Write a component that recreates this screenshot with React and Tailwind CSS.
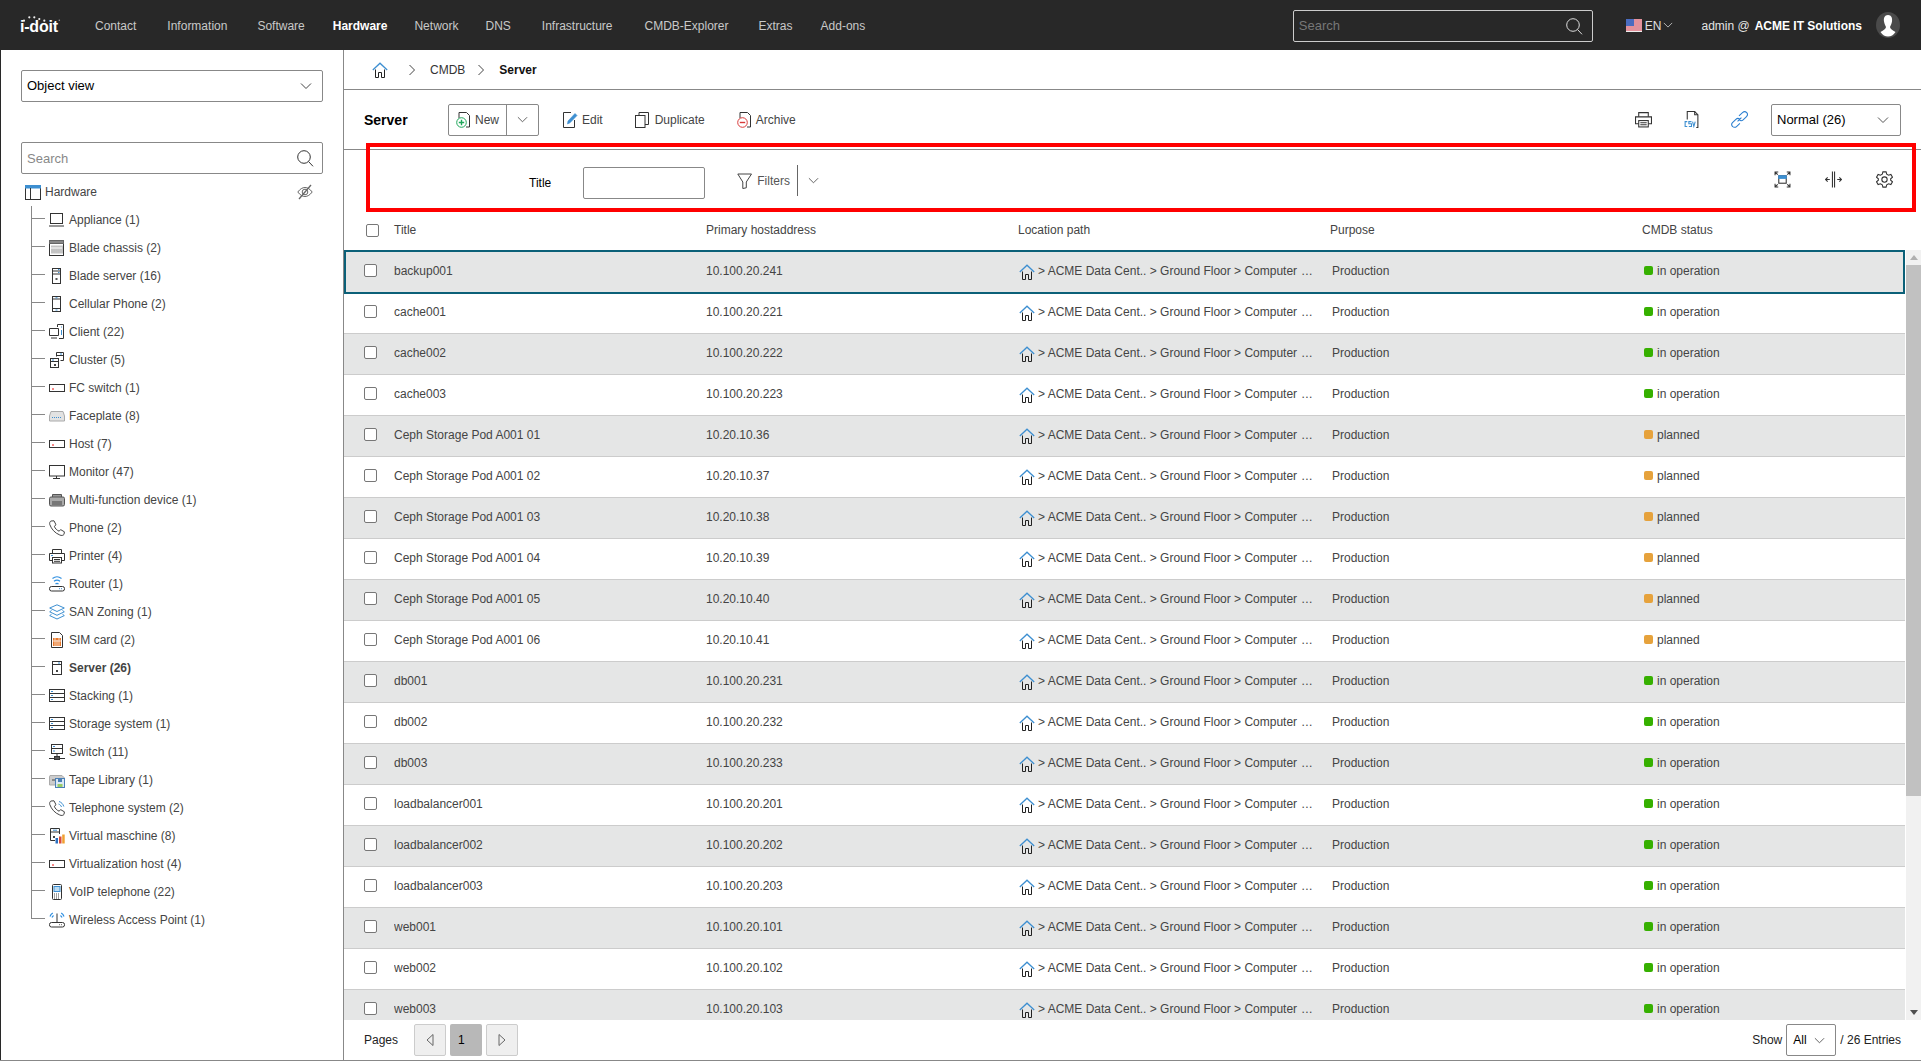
import React from "react";

const D = "#333";
const B = "#3d8fd1";
const Svg = ({ children, s = 16, c = "" }) => (
  <svg width={s} height={s} viewBox="0 0 16 16" fill="none" stroke={D} strokeWidth="1" className={"shrink-0 " + c}>{children}</svg>
);
const Chev = ({ c = "#444", w = 12 }) => (
  <svg width={w} height={w} viewBox="0 0 12 12" fill="none" stroke={c} strokeWidth="1" className="shrink-0"><path d="M1 3.5 L6 8.5 L11 3.5" /></svg>
);
const SearchI = ({ c = "#333" }) => (
  <svg width="17" height="17" viewBox="0 0 17 17" fill="none" stroke={c} strokeWidth="1" className="shrink-0"><circle cx="7" cy="7" r="6.3" /><path d="M11.6 11.6 L16 16.3" /></svg>
);
const Home = () => (
  <Svg>
    <path d="M3.5 7.5 V15.5 H6.5 V10.5 H9.5 V15.5 H12.5 V7.5" stroke="#222" />
    <path d="M0.8 8 L8 1.2 L15.2 8" stroke={B} strokeWidth="1.3" />
  </Svg>
);
const Switchy = () => (<Svg><rect x="0.5" y="4.5" width="15" height="7" /><path d="M3 9 H5" stroke="#e11" /></Svg>);
const Rack = () => (
  <Svg>
    <rect x="0.5" y="1.5" width="15" height="12" />
    <path d="M0.5 5.5 H15.5 M0.5 9.5 H15.5" />
    <path d="M2 3.5 H4 M2 7.5 H4 M2 11.5 H4" stroke={B} />
  </Svg>
);
const Srv = () => (
  <Svg>
    <rect x="3.5" y="1.5" width="9" height="13" />
    <path d="M3.5 4.5 H12.5" />
    <path d="M9 3 H11" stroke={B} />
    <rect x="7" y="10" width="2" height="2" fill="#444" stroke="none" />
  </Svg>
);
const icons = {
  laptop: () => (<Svg><rect x="1.5" y="1.5" width="12" height="10" /><path d="M0 14 H15" /></Svg>),
  chassis: () => (
    <Svg>
      <rect x="0.5" y="0.5" width="14" height="15" />
      <rect x="0.5" y="0.5" width="14" height="3" fill="#888" stroke="#666" />
      <path d="M3 5.5 V13.5 M5 5.5 V13.5 M7 5.5 V13.5 M9 5.5 V13.5 M11 5.5 V13.5 M13 5.5 V13.5" stroke="#888" />
      <path d="M2 8 H13" stroke="#fff" />
    </Svg>
  ),
  blade: () => (
    <Svg>
      <rect x="3.5" y="0.5" width="8" height="15" />
      <path d="M3.5 3 H11.5 M3.5 6 H11.5" />
      <path d="M9 1.5 H10.5 M9 4.5 H10.5" stroke={B} />
      <rect x="6.5" y="10" width="2" height="2" fill="#555" stroke="none" />
    </Svg>
  ),
  cell: () => (
    <Svg>
      <rect x="3.5" y="0.5" width="8" height="15" />
      <path d="M3.5 3 H11.5 M3.5 12.5 H11.5" />
      <path d="M6.5 1.8 H8.5 M6.5 14 H8.5" stroke={B} />
    </Svg>
  ),
  client: () => (
    <Svg>
      <path d="M9.5 4.5 H0.5 V11.5 H9.5 Z M2 14 H8" />
      <path d="M8.5 3 V0.5 H14.5 V14.5 H10" />
      <path d="M12 3 H13 M12.5 6 V11" stroke={B} />
    </Svg>
  ),
  cluster: () => (
    <Svg>
      <rect x="1.5" y="6.5" width="8" height="9" />
      <path d="M1.5 9.5 H9.5" />
      <path d="M3 8 H5" stroke={B} />
      <rect x="5" y="12" width="2" height="2" fill="#444" stroke="none" />
      <path d="M7.5 4.5 V0.5 H14.5 V8.5 H11.5" />
      <path d="M7.5 3.5 H14.5" />
      <path d="M11 2 H13" stroke={B} />
    </Svg>
  ),
  fc: Switchy,
  face: () => (
    <Svg>
      <path d="M2 3.5 H14 L15.5 8 V13 H0.5 V8 Z" fill="#e2e2e2" stroke="#aaa" />
      <path d="M3 9.5 H13" stroke={B} strokeDasharray="1 1" />
    </Svg>
  ),
  monitor: () => (<Svg><rect x="0.5" y="1.5" width="15" height="10.5" /><path d="M7.5 12 V14 M4 14.5 H11" /></Svg>),
  mfd: () => (
    <Svg>
      <path d="M3.5 5 V2.5 H12.5 V5" fill="#999" stroke="#555" />
      <rect x="0.5" y="5" width="15" height="9" rx="1.5" fill="#aaa" stroke="#555" />
      <rect x="3" y="9" width="10" height="4" fill="#777" stroke="none" />
    </Svg>
  ),
  phone: () => (
    <Svg><path d="M2 1 L5 0.8 L7 4.8 L5.3 6.3 C6.2 8.6 8 10.4 10.2 11.2 L11.6 9.6 L15.4 11.8 L15 14.4 C14.2 15.5 12.5 15.8 10.8 15 C5.8 13 2.5 9.2 0.8 4.6 C0.4 3 0.8 1.6 2 1 Z" stroke="#444" /></Svg>
  ),
  printer: () => (
    <Svg>
      <path d="M3.5 5.5 V1.5 H12.5 V5.5" />
      <path d="M3.5 12.5 H0.5 V5.5 H15.5 V12.5 H12.5" />
      <rect x="3.5" y="9.5" width="9" height="5.5" />
      <path d="M5 11.5 H11 M5 13.3 H11" />
      <path d="M2 7.5 H4" stroke={B} />
    </Svg>
  ),
  router: () => (
    <Svg>
      <rect x="0.5" y="10.5" width="15" height="4.5" rx="2" />
      <path d="M10 12.7 H13" stroke={B} strokeDasharray="1 1" />
      <path d="M3.5 2.5 C6.2 0.4 9.8 0.4 12.5 2.5 M5 5.2 C6.8 3.8 9.2 3.8 11 5.2 M6.5 8 C7.4 7.2 8.6 7.2 9.5 8" stroke="#2f8fe0" strokeWidth="1.2" />
    </Svg>
  ),
  san: () => (
    <Svg>
      <path d="M8 0.8 L15.3 4 L8 7.5 L0.7 4 Z" stroke={B} />
      <path d="M2.5 6.5 L0.7 7.8 L8 11.3 L15.3 7.8 L13.5 6.5 M2.5 10.3 L0.7 11.6 L8 15 L15.3 11.6 L13.5 10.3" stroke={B} />
    </Svg>
  ),
  sim: () => (
    <Svg>
      <path d="M2.5 0.5 H10.5 L13.5 3.5 V15.5 H2.5 Z" />
      <rect x="4" y="6" width="8" height="8" fill="#e8782a" stroke="none" />
      <path d="M6 6 V14 M8 8 V14 M10 6 V14 M4 9 H12" stroke="#fff" strokeWidth="0.7" />
    </Svg>
  ),
  server: Srv,
  stack: Rack,
  swi: () => (
    <Svg>
      <rect x="2.5" y="0.5" width="11" height="9" />
      <path d="M2.5 4.5 H13.5" />
      <path d="M4 2.5 H6 M4 7 H6" stroke={B} />
      <path d="M8 9.5 V12.5 M0 14.5 H5.5 M10.5 14.5 H16" />
      <rect x="5.5" y="12.5" width="5" height="3" fill="#555" />
    </Svg>
  ),
  tape: () => (
    <Svg>
      <path d="M1 3.5 H13 L15.5 6 V8 H7 V13 H0.5 V5 Z" fill="#ccc" stroke="#aaa" />
      <rect x="3" y="7" width="3" height="2" fill="#888" stroke="none" />
      <rect x="6.5" y="6.5" width="9" height="9" fill="#dbe9f6" stroke="#4a7fb5" />
      <rect x="9" y="7" width="4" height="3" fill="#4a7fb5" stroke="none" />
      <rect x="8.5" y="12" width="5" height="3" fill="#9c6" stroke="none" />
    </Svg>
  ),
  tel: () => (
    <Svg>
      <path d="M2 1 L5 0.8 L7 4.8 L5.3 6.3 C6.2 8.6 8 10.4 10.2 11.2 L11.6 9.6 L15.4 11.8 L15 14.4 C14.2 15.5 12.5 15.8 10.8 15 C5.8 13 2.5 9.2 0.8 4.6 C0.4 3 0.8 1.6 2 1 Z" stroke="#444" />
      <path d="M10 1.5 C12.5 2.3 14 4 14.8 6.5 M9.5 4 C11 4.5 12 5.5 12.5 7" stroke={B} />
    </Svg>
  ),
  vm: () => (
    <Svg>
      <path d="M6 12.5 H1.5 V0.5 H10.5 V6" />
      <path d="M1.5 4 H10.5" />
      <path d="M4 2.2 H8" stroke={B} />
      <rect x="4" y="8" width="2" height="2" fill="#444" stroke="none" />
      <rect x="6.5" y="10" width="2.5" height="5.5" fill="#2a6fc0" stroke="none" />
      <rect x="10" y="8.5" width="2.5" height="7" fill="#d94a3a" stroke="none" />
      <rect x="13.2" y="6.5" width="2.5" height="9" fill="#f0a030" stroke="none" />
    </Svg>
  ),
  voip: () => (
    <Svg>
      <rect x="3.5" y="0.5" width="9" height="15" rx="1" />
      <rect x="5" y="2.5" width="6" height="5" fill="#bcdcf3" stroke={B} />
      <path d="M5 10 H11 M5 12 H11 M5 14 H11" stroke="#444" strokeDasharray="1 1" />
    </Svg>
  ),
  wap: () => (
    <Svg>
      <rect x="0.5" y="10.5" width="15" height="4.5" rx="2" />
      <path d="M10 12.7 H13" stroke="#666" strokeDasharray="1 1" />
      <path d="M8 1.5 V10" />
      <path d="M1 4.5 C1.5 3 2.3 1.8 3.8 1 M3 5.5 C3.3 4.7 3.8 4 4.6 3.6 M15 4.5 C14.5 3 13.7 1.8 12.2 1 M13 5.5 C12.7 4.7 12.2 4 11.4 3.6" stroke="#2f8fe0" strokeWidth="1.2" />
    </Svg>
  ),
};

const tree = [
  ["Appliance (1)", "laptop"], ["Blade chassis (2)", "chassis"], ["Blade server (16)", "blade"], ["Cellular Phone (2)", "cell"],
  ["Client (22)", "client"], ["Cluster (5)", "cluster"], ["FC switch (1)", "fc"], ["Faceplate (8)", "face"],
  ["Host (7)", "fc"], ["Monitor (47)", "monitor"], ["Multi-function device (1)", "mfd"], ["Phone (2)", "phone"],
  ["Printer (4)", "printer"], ["Router (1)", "router"], ["SAN Zoning (1)", "san"], ["SIM card (2)", "sim"],
  ["Server (26)", "server"], ["Stacking (1)", "stack"], ["Storage system (1)", "stack"], ["Switch (11)", "swi"],
  ["Tape Library (1)", "tape"], ["Telephone system (2)", "tel"], ["Virtual maschine (8)", "vm"],
  ["Virtualization host (4)", "fc"], ["VoIP telephone (22)", "voip"], ["Wireless Access Point (1)", "wap"],
];

const rows = [
  ["backup001", "10.100.20.241", "o"], ["cache001", "10.100.20.221", "o"], ["cache002", "10.100.20.222", "o"], ["cache003", "10.100.20.223", "o"],
  ["Ceph Storage Pod A001 01", "10.20.10.36", "p"], ["Ceph Storage Pod A001 02", "10.20.10.37", "p"], ["Ceph Storage Pod A001 03", "10.20.10.38", "p"],
  ["Ceph Storage Pod A001 04", "10.20.10.39", "p"], ["Ceph Storage Pod A001 05", "10.20.10.40", "p"], ["Ceph Storage Pod A001 06", "10.20.10.41", "p"],
  ["db001", "10.100.20.231", "o"], ["db002", "10.100.20.232", "o"], ["db003", "10.100.20.233", "o"],
  ["loadbalancer001", "10.100.20.201", "o"], ["loadbalancer002", "10.100.20.202", "o"], ["loadbalancer003", "10.100.20.203", "o"],
  ["web001", "10.100.20.101", "o"], ["web002", "10.100.20.102", "o"], ["web003", "10.100.20.103", "o"],
];

const Box = () => <span className="block w-[13px] h-[13px] bg-white border border-[#777] rounded-[2px] shrink-0" />;

function TopBar() {
  return (
    <header className="h-[50px] shrink-0 bg-[#282828] flex items-center text-[#c9c9c9]">
      <div className="relative ml-[20px] w-[42px] h-[30px] shrink-0">
        <svg width="42" height="14" viewBox="0 0 42 14" className="absolute left-0 top-0" fill="#eee">
          <circle cx="4" cy="10.7" r="1.1" /><circle cx="9.3" cy="7.3" r="1.1" /><circle cx="14.3" cy="7.3" r="1.1" /><circle cx="19.3" cy="9" r="1.1" /><circle cx="24.3" cy="10.7" r="1.1" /><circle cx="39.3" cy="10.3" r="0.8" fill="#999" />
        </svg>
        <span className="absolute left-0 top-[7px] text-[16px] leading-[20px] font-bold text-white tracking-[-0.2px]">i-doit</span>
      </div>
      <nav className="flex items-center ml-[33px] mt-[2px]">
        <span>Contact</span>
        <span className="ml-[31px]">Information</span>
        <span className="ml-[30px]">Software</span>
        <span className="ml-[28px] font-bold text-white">Hardware</span>
        <span className="ml-[27px]">Network</span>
        <span className="ml-[27px]">DNS</span>
        <span className="ml-[31px]">Infrastructure</span>
        <span className="ml-[32px]">CMDB-Explorer</span>
        <span className="ml-[30px]">Extras</span>
        <span className="ml-[28px]">Add-ons</span>
      </nav>
      <div className="ml-auto w-[300px] h-[32px] mt-[2px] border border-[#ccc] rounded-[2px] flex items-center justify-between pl-[5px] pr-[9px]">
        <span className="text-[#777] text-[13px]">Search</span>
        <SearchI c="#ddd" />
      </div>
      <svg width="16" height="13" viewBox="0 0 16 13" className="ml-[33px] shrink-0">
        <rect width="16" height="13" fill="#eee" />
        <path d="M0 1 H16 M0 3 H16 M0 5 H16 M0 7 H16 M0 9 H16 M0 11 H16" stroke="#d8364a" strokeWidth="1" />
        <rect width="8" height="7" fill="#4a6cc0" />
      </svg>
      <span className="ml-[3px] mt-[2px] text-[#e0e0e0]">EN</span>
      <span className="ml-[2px]"><Chev c="#ccc" w={10} /></span>
      <span className="ml-[28px] mt-[2px] text-[#e4e4e4]">admin @</span>
      <span className="ml-[5px] mt-[2px] font-bold text-white">ACME IT Solutions</span>
      <svg width="24" height="26" viewBox="0 0 24 26" className="ml-[14px] mr-[21px] shrink-0">
        <ellipse cx="12" cy="13" rx="12" ry="13" fill="#4a4a4a" />
        <path d="M12 3 C8.5 3 7.5 6 8 9.5 C8.4 12 9.5 14 10 15 C10 17 7.5 18 4.5 20 C6.5 23 9 24.5 12 24.5 C15 24.5 17.5 23 19.5 20 C16.5 18 14 17 14 15 C14.5 14 15.6 12 16 9.5 C16.5 6 15.5 3 12 3 Z" fill="#fff" />
      </svg>
    </header>
  );
}

function Sidebar() {
  return (
    <aside className="w-[344px] shrink-0 border-l border-l-[#282828] border-r border-r-[#888] pl-[20px] pt-[20px]">
      <div className="w-[302px] h-[32px] border border-[#888] rounded-[2px] flex items-center justify-between pl-[5px] pr-[10px] text-black text-[13px]">
        <span>Object view</span><Chev />
      </div>
      <div className="mt-[40px] w-[302px] h-[32px] border border-[#888] rounded-[2px] flex items-center justify-between pl-[5px] pr-[8px]">
        <span className="text-[#888] text-[13px] mt-[1px]">Search</span><SearchI />
      </div>
      <div className="-ml-[20px] mt-[10px] h-[16px] flex items-center text-[#444] pl-[24px] w-[312px]">
        <Svg>
          <rect x="0.5" y="1.5" width="15" height="14" />
          <rect x="0.5" y="1.5" width="15" height="2.5" fill={B} stroke={B} />
          <path d="M5.5 4 V15.5" />
        </Svg>
        <span className="ml-[4px]">Hardware</span>
        <span className="ml-auto">
          <Svg>
            <path d="M0.8 8 C3 5 5.5 3.5 8 3.5 C10.5 3.5 13 5 15.2 8 C13 11 10.5 12.5 8 12.5 C5.5 12.5 3 11 0.8 8 Z" stroke="#666" />
            <circle cx="8" cy="8" r="2.8" stroke="#666" />
            <path d="M14 1 L2 15" stroke="#666" strokeWidth="1.3" />
          </Svg>
        </span>
      </div>
      <ul className="-ml-[20px] mt-[6px] pl-[30px]">
        {tree.map(([label, ic], i) => {
          const Ic = icons[ic];
          const last = i === tree.length - 1;
          const bold = label.startsWith("Server");
          return (
            <li key={label} className="h-[28px] flex items-center">
              <div className="w-[14px] h-full flex flex-col shrink-0">
                <div className="h-[13px] border-l border-b border-[#888]" />
                <div className={"flex-1 border-l " + (last ? "border-transparent" : "border-[#888]")} />
              </div>
              <span className="ml-[4px]"><Ic /></span>
              <span className={"ml-[4px] text-[#444] " + (bold ? "font-bold" : "")}>{label}</span>
            </li>
          );
        })}
      </ul>
    </aside>
  );
}

function Toolbar() {
  return (
    <div className="h-[60px] shrink-0 border-b border-[#888] flex items-center pl-[20px] pr-[20px] text-[#444]">
      <span className="w-[84px] font-bold text-[14px] text-black">Server</span>
      <div className="w-[91px] h-[32px] border border-[#888] rounded-[2px] flex items-center shrink-0">
        <div className="w-[58px] h-full border-r border-[#888] flex items-center pl-[7px]">
          <Svg>
            <path d="M3 6 V0.5 H10.5 L13.5 3.5 V15 H10" />
            <circle cx="5.5" cy="10.5" r="4.8" stroke="#1ea65a" fill="#fff" />
            <path d="M5.5 7.8 V13.2 M2.8 10.5 H8.2" stroke="#1ea65a" strokeWidth="1.4" />
          </Svg>
          <span className="ml-[3px]">New</span>
        </div>
        <div className="flex-1 flex items-center justify-center"><Chev c="#555" w={11} /></div>
      </div>
      <span className="ml-[23px]">
        <Svg>
          <path d="M9 0.5 H1.5 V15.5 H12.5 V8" />
          <path d="M5.5 12 L6 9 L13 1.5 L15 3.5 L8 10.8 Z" fill={B} stroke={B} strokeWidth="0.6" />
        </Svg>
      </span>
      <span className="ml-[4px]">Edit</span>
      <span className="ml-[32px]">
        <Svg>
          <rect x="0.5" y="3.5" width="9.5" height="12" />
          <path d="M4 3.5 V0.5 H13.5 V12.5 H10" />
        </Svg>
      </span>
      <span className="ml-[4px]">Duplicate</span>
      <span className="ml-[32px]">
        <Svg>
          <path d="M3 6 V0.5 H10.5 L13.5 3.5 V15 H10" />
          <circle cx="5.5" cy="10.5" r="4.8" stroke="#d83a3a" fill="#fff" />
          <path d="M2.8 10.5 H8.2" stroke="#d83a3a" strokeWidth="1.4" />
        </Svg>
      </span>
      <span className="ml-[3px]">Archive</span>
      <div className="ml-auto flex items-center">
        <Svg s={17}>
          <path d="M3.5 5.5 V1.5 H12.5 V5.5" />
          <path d="M3.5 12 H0.5 V5.5 H15.5 V12 H12.5" />
          <rect x="3.5" y="9" width="9" height="6" />
          <path d="M5 11 H11 M5 13 H11" />
        </Svg>
        <span className="ml-[31px]">
          <Svg s={17}>
            <path d="M4 8 V0.5 H11 L14 3.5 V15.5 H12.5" />
            <path d="M11 0.5 V3.5 H14" />
            <path d="M4 10 H2 V14.5 H4 M8 10 H5.5 V12 H8 V14.5 H5.5 M9 10 L10.2 14.5 L11.5 10" stroke={B} />
          </Svg>
        </span>
        <span className="ml-[31px]">
          <Svg s={17}>
            <path d="M6.2 9.8 L9.8 6.2 M7.5 4.5 L10.8 1.5 C12 0.5 13.8 0.6 14.8 1.6 C15.7 2.6 15.6 4.2 14.6 5.2 L11.4 8.4 C10.3 9.4 8.8 9.3 7.8 8.4 M8.4 11.6 L5.2 14.6 C4.2 15.6 2.4 15.6 1.5 14.6 C0.5 13.6 0.5 12 1.4 11 L4.6 7.8 C5.7 6.8 7.2 6.8 8.2 7.7" stroke="#2b7fd0" />
          </Svg>
        </span>
        <div className="ml-[23px] w-[130px] h-[32px] border border-[#888] rounded-[2px] flex items-center justify-between pl-[5px] pr-[11px] text-black text-[13px]">
          <span>Normal (26)</span><Chev c="#555" />
        </div>
      </div>
    </div>
  );
}

function Filter() {
  return (
    <div className="h-[62px] shrink-0 flex items-center pl-[185px] pr-[28px] pt-[3px]">
      <span className="text-black">Title</span>
      <div className="ml-[32px] w-[122px] h-[32px] border border-[#888] rounded-[2px] bg-white" />
      <span className="ml-[32px] -mt-[3px]">
        <Svg>
          <path d="M0.8 1 H14.5 L9.3 9 V14.8 L5.8 15.5 V9 Z" stroke="#444" />
        </Svg>
      </span>
      <span className="ml-[4px] -mt-[4px] text-[#555]">Filters</span>
      <span className="ml-[7px] -mt-[4px] h-[31px] border-l border-[#666]" />
      <span className="ml-[10px] -mt-[4px]"><Chev c="#555" w={11} /></span>
      <div className="ml-auto -mt-[6px] flex items-center gap-[34px]">
        <Svg s={17}>
          <path d="M1 4 V1 H4 M12 1 H15 V4 M1 12 V15 H4 M12 15 H15 V12 M1 1 L3.5 3.5 M15 1 L12.5 3.5 M1 15 L3.5 12.5 M15 15 L12.5 12.5" />
          <rect x="4.5" y="4.5" width="7" height="7" />
          <rect x="4.5" y="4.5" width="7" height="2.4" fill={B} stroke={B} />
        </Svg>
        <Svg s={17}>
          <path d="M7 0.5 V15.5 M9 0.5 V15.5" />
          <path d="M4.5 8 H0.5 M2.5 6 L0.5 8 L2.5 10 M11.5 8 H15.5 M13.5 6 L15.5 8 L13.5 10" />
        </Svg>
        <Svg s={17}>
          <path d="M6.5 0.8 H9.5 L10.1 3 L11.8 3.9 L14 3.2 L15.5 5.8 L13.8 7.3 V8.7 L15.5 10.2 L14 12.8 L11.8 12.1 L10.1 13 L9.5 15.2 H6.5 L5.9 13 L4.2 12.1 L2 12.8 L0.5 10.2 L2.2 8.7 V7.3 L0.5 5.8 L2 3.2 L4.2 3.9 L5.9 3 Z" />
          <circle cx="8" cy="8" r="2.5" />
        </Svg>
      </div>
    </div>
  );
}

function Row({ r, i }) {
  const planned = r[2] === "p";
  return (
    <div className={"relative h-[41px] flex items-center pb-[3px] border-b border-[#ccc] text-[#444] " + (i === 0 ? "z-10 " : "") + (i % 2 === 0 ? "bg-[#e5e6e6]" : "bg-white")}>
      {i === 0 && <div className="absolute left-0 right-0 -top-[2px] -bottom-[2px] border-2 border-[#0b6078] pointer-events-none" />}
      <div className="w-[50px] pl-[20px] shrink-0"><Box /></div>
      <div className="w-[312px] shrink-0 truncate">{r[0]}</div>
      <div className="w-[312px] shrink-0">{r[1]}</div>
      <div className="w-[312px] shrink-0 flex items-center pl-[1px] whitespace-nowrap">
        <span className="mt-[2px]"><Home /></span>
        <span className="ml-[3px]">&gt; ACME Data Cent.. &gt; Ground Floor &gt; Computer <span className="ml-[1px] tracking-[0.5px]">...</span></span>
      </div>
      <div className="w-[311px] shrink-0 pl-[2px]">Production</div>
      <div className="flex items-center pl-[3px]">
        <span className={"w-[9px] h-[9px] rounded-[2px] " + (planned ? "bg-[#e6a23c]" : "bg-[#36b000]")} />
        <span className="ml-[4px]">{planned ? "planned" : "in operation"}</span>
      </div>
    </div>
  );
}

function Scrollbar() {
  return (
    <div className="w-[15px] shrink-0 bg-[#f1f1f1] flex flex-col items-center">
      <div className="h-[15px] flex items-center justify-center">
        <svg width="8" height="5" viewBox="0 0 8 5" className="shrink-0"><path d="M0 5 L4 0 L8 5 Z" fill="#b0b0b0" /></svg>
      </div>
      <div className="w-full h-[531px] bg-[#c1c1c1]" />
      <div className="mt-auto h-[15px] flex items-center justify-center">
        <svg width="8" height="5" viewBox="0 0 8 5" className="shrink-0"><path d="M0 0 L4 5 L8 0 Z" fill="#505050" /></svg>
      </div>
    </div>
  );
}

function Footer() {
  return (
    <div className="h-[40px] shrink-0 flex items-center pl-[20px] pr-[20px] text-[#222]">
      <span>Pages</span>
      <div className="ml-[16px] w-[32px] h-[32px] bg-[#efefef] border border-[#ccc] rounded-[2px] flex items-center justify-center">
        <svg width="8" height="12" viewBox="0 0 8 12" fill="none" stroke="#666" className="shrink-0"><path d="M7 0.5 L1 6 L7 11.5 Z" /></svg>
      </div>
      <div className="ml-[4px] w-[32px] h-[32px] bg-[#b8b8b8] rounded-[2px] flex items-center pl-[8px] text-black">1</div>
      <div className="ml-[4px] w-[32px] h-[32px] bg-[#efefef] border border-[#ccc] rounded-[2px] flex items-center justify-center">
        <svg width="8" height="12" viewBox="0 0 8 12" fill="none" stroke="#666" className="shrink-0"><path d="M1 0.5 L7 6 L1 11.5 Z" /></svg>
      </div>
      <span className="ml-auto">Show</span>
      <div className="ml-[4px] w-[50px] h-[32px] border border-[#888] rounded-[2px] flex items-center justify-between pl-[6px] pr-[10px] text-black">
        <span>All</span><Chev c="#555" w={11} />
      </div>
      <span className="ml-[4px]">/ 26 Entries</span>
    </div>
  );
}

export default function App() {
  return (
    <div className="w-[1921px] h-[1061px] overflow-hidden flex flex-col bg-white text-[12px] leading-[14px] font-['Liberation_Sans',Arial,sans-serif]">
      <TopBar />
      <div className="flex-1 min-h-0 flex border-b border-[#888]">
        <Sidebar />
        <main className="relative flex-1 min-w-0 flex flex-col">
          <div className="h-[40px] shrink-0 border-b border-[#888] flex items-center pl-[28px] text-[#333]">
            <Home />
            <span className="ml-[20px]"><svg width="8" height="12" viewBox="0 0 8 12" fill="none" stroke="#444" className="block"><path d="M1.5 1 L6.5 6 L1.5 11" /></svg></span>
            <span className="ml-[14px]">CMDB</span>
            <span className="ml-[12px]"><svg width="8" height="12" viewBox="0 0 8 12" fill="none" stroke="#444" className="block"><path d="M1.5 1 L6.5 6 L1.5 11" /></svg></span>
            <span className="ml-[14px] font-bold text-[#111]">Server</span>
          </div>
          <Toolbar />
          <Filter />
          <div className="absolute left-[22px] top-[93px] w-[1550px] h-[69px] border-4 border-[#ff0000] pointer-events-none" />
          <div className="h-[38px] shrink-0 flex items-center text-[#444] pb-[2px]">
            <div className="w-[50px] pl-[22px] shrink-0"><Box /></div>
            <div className="w-[312px] shrink-0">Title</div>
            <div className="w-[312px] shrink-0">Primary hostaddress</div>
            <div className="w-[312px] shrink-0">Location path</div>
            <div className="w-[312px] shrink-0">Purpose</div>
            <div>CMDB status</div>
          </div>
          <div className="flex-1 min-h-0 flex">
            <div className="flex-1 min-w-0 overflow-hidden pt-[2px] mr-[1px]">
              {rows.map((r, i) => <Row key={r[0]} r={r} i={i} />)}
            </div>
            <Scrollbar />
          </div>
          <Footer />
        </main>
      </div>
    </div>
  );
}
